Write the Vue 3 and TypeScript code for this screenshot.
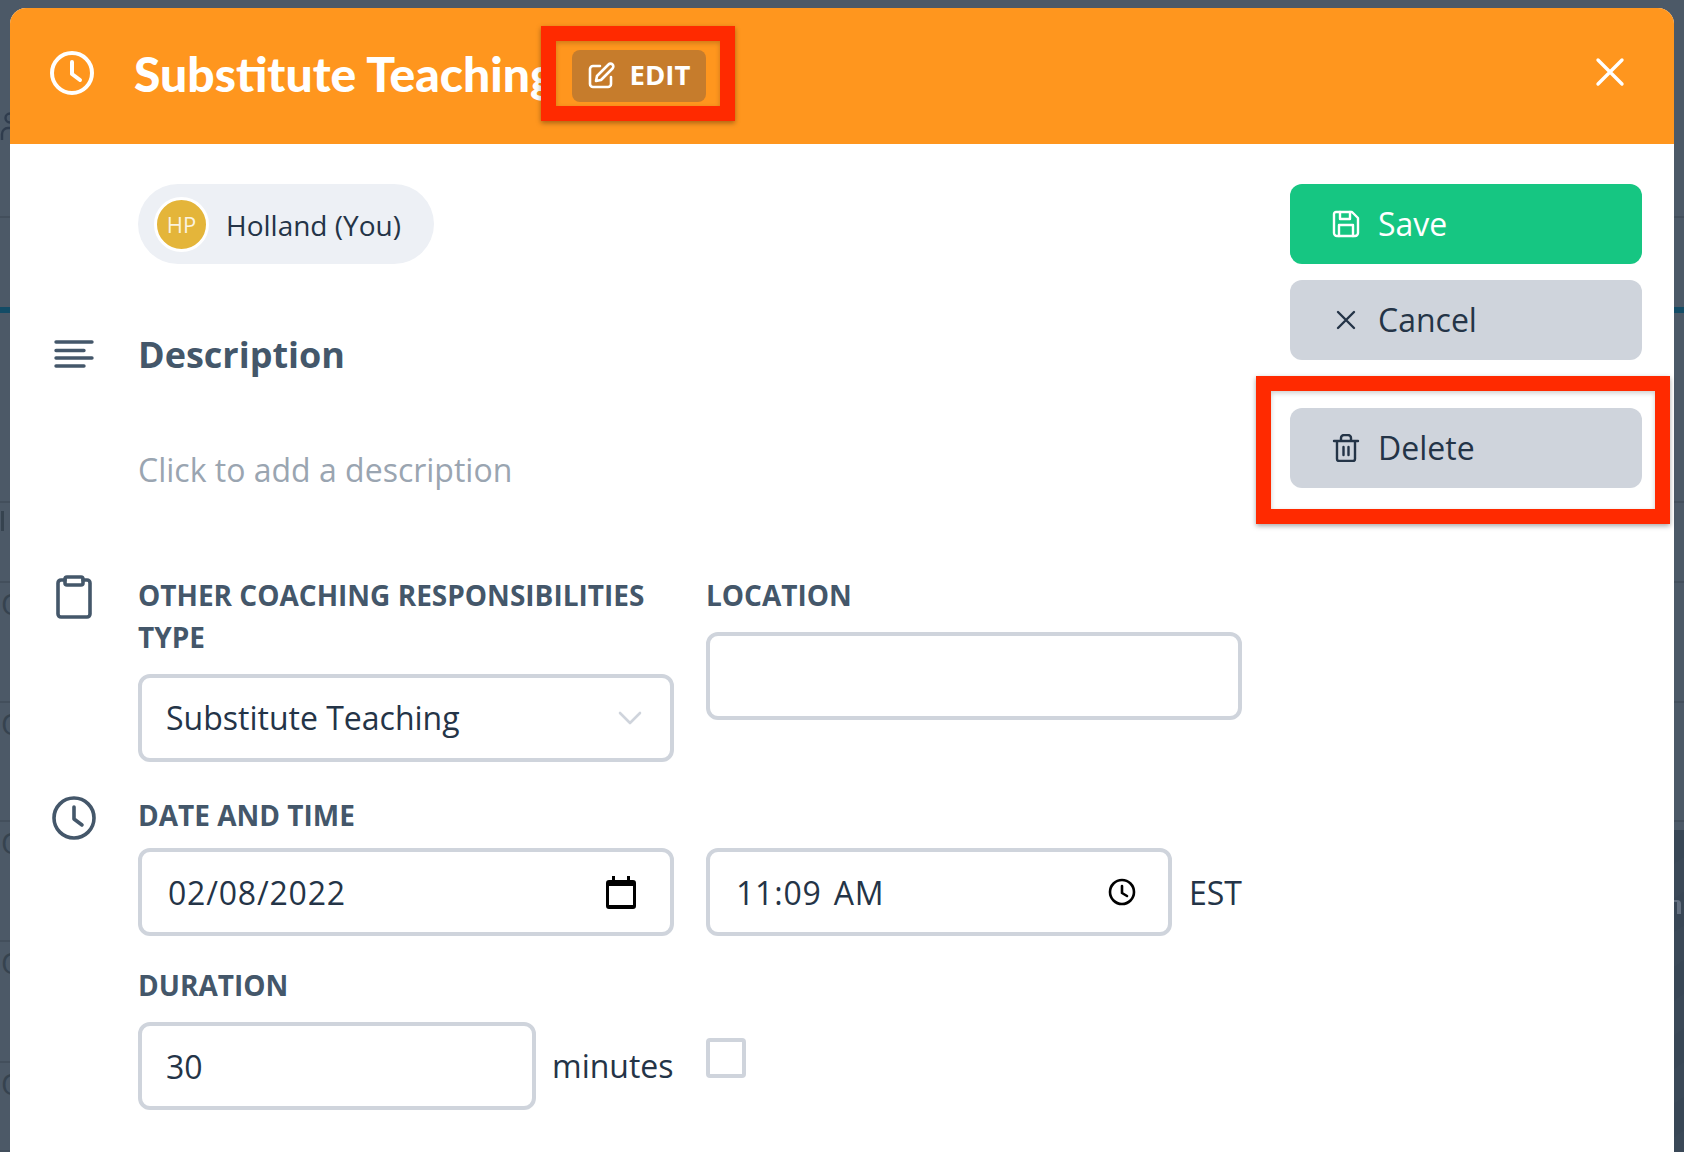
<script setup lang="ts">
interface BackRow {
  height: number;
  glyph: boolean;
  teal: boolean;
}

const rows: BackRow[] = [
  { height: 218, glyph: false, teal: false },
  { height: 95, glyph: false, teal: true },
  { height: 190, glyph: false, teal: false },
  { height: 80, glyph: false, teal: false },
  { height: 120, glyph: true, teal: false },
  { height: 119, glyph: true, teal: false },
  { height: 120, glyph: true, teal: false },
  { height: 121, glyph: true, teal: false },
  { height: 89, glyph: true, teal: false },
];
</script>

<template>
  <div class="backdrop">
    <div class="behind" aria-hidden="true">
      <div
        v-for="(row, i) in rows"
        :key="i"
        class="back-row"
        :class="{ teal: row.teal }"
        :style="{ height: row.height + 'px' }"
      >
        <span v-if="row.glyph" class="back-glyph">O</span>
      </div>
      <svg class="back-person" viewBox="0 0 10 28" fill="none" stroke="#2f3c4d" stroke-width="2.4">
        <circle cx="10" cy="6" r="4.500" />
        <path d="M2 28v-6a6 6 0 0 1 6-6h2" />
      </svg>
      <span class="back-bar"></span>
      <div class="back-corner"><span></span></div>
    </div>

    <section class="modal">
      <header class="head">
        <svg class="head-clock" viewBox="0 0 44 44" fill="none" stroke="#fff" stroke-width="4" stroke-linecap="round" stroke-linejoin="round">
          <circle cx="22" cy="22" r="20" />
          <path d="M22 11v12l8 6" />
        </svg>
        <h1 class="title">Substitute Teaching</h1>
        <button class="edit">
          <svg viewBox="0 0 28 28" fill="none" stroke="#fff" stroke-width="2.6" stroke-linecap="round" stroke-linejoin="round">
            <path d="M13 4H6a3 3 0 0 0-3 3v15a3 3 0 0 0 3 3h15a3 3 0 0 0 3-3v-7" />
            <path d="M21.500 2.500a2.800 2.800 0 0 1 4 4L14 18l-5 1 1-5z" />
          </svg>
          <span>EDIT</span>
        </button>
        <svg class="close" viewBox="0 0 30 30" fill="none" stroke="#fff" stroke-width="3.4" stroke-linecap="round">
          <path d="M3 3l24 24M27 3L3 27" />
        </svg>
      </header>

      <div class="body">
        <div class="main">
          <div class="pill-row">
            <div class="pill">
              <span class="avatar">HP</span>
              <span class="who">Holland (You)</span>
            </div>
          </div>

          <div class="desc-row">
            <svg class="side-icon lines" viewBox="0 0 40 28" fill="none" stroke="#44576a" stroke-width="3.4" stroke-linecap="round">
              <path d="M2 2h36M2 10.500h28M2 18h36M2 26h28" />
            </svg>
            <h2 class="desc-title">Description</h2>
          </div>
          <p class="placeholder">Click to add a description</p>

          <div class="type-row">
            <svg class="side-icon clip" viewBox="0 0 36 44" fill="none" stroke="#44576a" stroke-width="3.6" stroke-linecap="round" stroke-linejoin="round">
              <path d="M9 5H5a3 3 0 0 0-3 3v31a3 3 0 0 0 3 3h26a3 3 0 0 0 3-3V8a3 3 0 0 0-3-3h-4" />
              <rect x="9" y="2" width="18" height="8" rx="2" />
            </svg>
            <div class="field type-field">
              <label class="label">Other coaching responsibilities type</label>
              <div class="control select">
                <span>Substitute Teaching</span>
                <svg viewBox="0 0 24 14" fill="none" stroke="#cfd4dc" stroke-width="2.6" stroke-linecap="round" stroke-linejoin="round">
                  <path d="M2 2l10 10L22 2" />
                </svg>
              </div>
            </div>
            <div class="field loc-field">
              <label class="label">Location</label>
              <div class="control"></div>
            </div>
          </div>

          <div class="date-row">
            <svg class="side-icon date-clock" viewBox="0 0 44 44" fill="none" stroke="#44576a" stroke-width="3.6" stroke-linecap="round" stroke-linejoin="round">
              <circle cx="22" cy="22" r="20" />
              <path d="M22 11v12l8 6" />
            </svg>
            <div class="field date-field">
              <label class="label tight">Date and time</label>
              <div class="inputs">
                <div class="control date">
                  <span class="native">02/08/2022</span>
                  <svg viewBox="0 0 30 34" class="cal">
                    <path fill="#000" d="M6 1h3v4h12V1h3v4h3a3 3 0 0 1 3 3v23a3 3 0 0 1-3 3H3a3 3 0 0 1-3-3V8a3 3 0 0 1 3-3h3z" />
                    <rect x="3" y="11" width="24" height="19" fill="#fff" />
                  </svg>
                </div>
                <div class="control time">
                  <span class="native">11:09 AM</span>
                  <svg viewBox="0 0 28 28" class="tclock" fill="none" stroke="#000" stroke-width="2.6" stroke-linecap="round" stroke-linejoin="round">
                    <circle cx="14" cy="14" r="12" />
                    <path d="M14 8v7l5 3" />
                  </svg>
                </div>
                <span class="suffix">EST</span>
              </div>
            </div>
          </div>

          <div class="duration">
            <label class="label">Duration</label>
            <div class="inputs">
              <div class="control dur"><span>30</span></div>
              <span class="suffix">minutes</span>
              <span class="check"></span>
            </div>
          </div>
        </div>

        <aside class="actions">
          <button class="btn save">
            <svg viewBox="0 0 28 28" fill="none" stroke="#fff" stroke-width="2.400" stroke-linecap="round" stroke-linejoin="round">
              <path d="M4 2h16l6 6v15a3 3 0 0 1-3 3H5a3 3 0 0 1-3-3V4a2 2 0 0 1 2-2z" />
              <path d="M8 2v7h10V2M7 26V15h14v11" />
            </svg>
            <span>Save</span>
          </button>
          <button class="btn">
            <svg viewBox="0 0 28 28" fill="none" stroke="#243447" stroke-width="2.400" stroke-linecap="round">
              <path d="M6 6l16 16M22 6L6 22" />
            </svg>
            <span>Cancel</span>
          </button>
          <button class="btn delete">
            <svg viewBox="0 0 28 28" fill="none" stroke="#243447" stroke-width="2.400" stroke-linecap="round" stroke-linejoin="round">
              <path d="M2 7h24M5 7v18a2 2 0 0 0 2 2h14a2 2 0 0 0 2-2V7M9 7V4a3 3 0 0 1 3-3h4a3 3 0 0 1 3 3v3M11.500 13v8M16.500 13v8" />
            </svg>
            <span>Delete</span>
          </button>
        </aside>
      </div>
    </section>

    <div class="mark mark-edit"></div>
    <div class="mark mark-delete"></div>
  </div>
</template>

<style>
html, body { margin: 0; background: #4c5967; }
</style>

<style scoped>
.backdrop {
  position: relative;
  width: 1684px;
  height: 1152px;
  overflow: hidden;
  box-sizing: border-box;
  padding: 8px 10px 0;
  background: #4c5967;
  font-family: "Open Sans", "Noto Sans", sans-serif;
  color: #243447;
}
.behind {
  position: absolute;
  inset: 0;
  display: flex;
  flex-direction: column;
  background: #4c5967;
}
.back-row {
  box-sizing: border-box;
  flex: none;
  border-bottom: 2px solid #434f5c;
  padding-top: 8px;
}
.back-row.teal { border-bottom: 6px solid #134c66; }
.back-glyph {
  display: block;
  font-size: 30px;
  line-height: 26px;
  color: #36434f;
  padding-left: 1px;
}
.back-person {
  position: absolute;
  left: 0;
  top: 112px;
  width: 10px;
  height: 28px;
}
.back-bar {
  position: absolute;
  left: 1px;
  top: 511px;
  width: 3px;
  height: 20px;
  background: #36434f;
}
.back-corner {
  position: absolute;
  right: 0;
  top: 830px;
  bottom: 0;
  width: 10px;
  background: repeating-linear-gradient(145deg, #384655 0 28px, #3a4857 28px 56px);
}
.back-corner span {
  position: absolute;
  left: 0;
  top: 70px;
  width: 7px;
  height: 14px;
  box-sizing: border-box;
  border-top: 2px solid #647080;
  border-right: 4px solid #647080;
  border-radius: 0 4px 0 0;
}
.modal {
  position: relative;
  height: 1144px;
  background: #fff;
  border-radius: 16px 16px 0 0;
  overflow: hidden;
}
.head {
  height: 136px;
  box-sizing: border-box;
  background: #ff961e;
  display: flex;
  align-items: center;
  padding: 0 49px 0 40px;
  color: #fff;
}
.head-clock { width: 44px; height: 44px; flex: none; margin-top: -6px; }
.title {
  margin: -6px 0 0 40px;
  font-family: Lato, "Open Sans", sans-serif;
  font-size: 48px;
  font-weight: 900;
  white-space: nowrap;
  width: 438px;
}
.edit {
  width: 134px;
  height: 52px;
  margin-top: -1px;
  border: 0;
  border-radius: 8px;
  background: #c67c2c;
  color: #fff;
  display: flex;
  align-items: center;
  justify-content: center;
  gap: 15px;
  font: 700 27.500px "Open Sans", sans-serif;
  padding: 0 1px 0 0;
}
.edit span { margin-top: -3px; }
.edit svg { width: 28px; height: 28px; flex: none; }
.close { width: 30px; height: 30px; margin-left: auto; margin-top: -8px; }

.body {
  display: flex;
  padding: 40px 32px 0 128px;
}
.main { width: 1106px; }
.pill-row { display: flex; }
.pill {
  width: 296px;
  height: 80px;
  box-sizing: border-box;
  border-radius: 40px;
  background: #edf0f5;
  display: flex;
  align-items: center;
  gap: 17px;
  padding-left: 16px;
  font-size: 28px;
}
.who { margin-top: 1px; }
.avatar {
  width: 49px;
  height: 49px;
  border: 3px solid #fff;
  border-radius: 50%;
  background: #e4b53a;
  color: rgba(255, 255, 255, 0.85);
  font-size: 22px;
  font-weight: 400;
  display: flex;
  align-items: center;
  justify-content: center;
  flex: none;
}
.desc-row { display: flex; align-items: center; position: relative; margin-top: 66px; height: 48px; }
.side-icon { position: absolute; }
.lines { left: -84px; top: 10px; width: 40px; height: 28px; }
.desc-title { margin: 0; font-size: 36px; font-weight: 700; color: #44576a; }
.placeholder { margin: 68px 0 0; font-size: 32px; line-height: 48px; color: #9aa5b1; }

.type-row { display: flex; gap: 32px; position: relative; margin-top: 80px; }
.clip { left: -82px; top: 1px; width: 36px; height: 44px; }
.field { display: flex; flex-direction: column; }
.type-field { width: 536px; }
.loc-field { width: 536px; }
.label {
  font-size: 28px;
  line-height: 42px;
  font-weight: 700;
  color: #44576a;
  text-transform: uppercase;
  margin-bottom: 16px;
}
.label.tight { margin-bottom: 12px; }
.control {
  height: 88px;
  box-sizing: border-box;
  border: 4px solid #cfd4dc;
  border-radius: 12px;
  display: flex;
  align-items: center;
  justify-content: space-between;
  font-size: 32px;
  background: #fff;
}
.select { padding: 0 28px 1px 24px; }
.select svg { width: 24px; height: 14px; }
.date-row { position: relative; margin-top: 32px; }
.date-clock { left: -86px; top: 2px; width: 44px; height: 44px; }
.date-field { width: 1106px; }
.inputs { display: flex; align-items: center; }
.date { width: 536px; padding: 0 34px 0 26px; }
.native { letter-spacing: 0.800px; word-spacing: 3px; }
.cal { width: 30px; height: 34px; }
.time { width: 466px; margin-left: 32px; padding: 0 32px 0 26px; }
.tclock { width: 28px; height: 28px; }
.suffix { font-size: 32px; margin-left: 17px; }
.inputs .dur + .suffix { margin: -2px 0 0 16px; }
.duration { margin-top: 28px; display: flex; flex-direction: column; }
.dur { width: 398px; padding: 0 24px; }
.check {
  width: 40px;
  height: 40px;
  box-sizing: border-box;
  border: 4px solid #cfd4dc;
  border-radius: 4px;
  margin-left: 32px;
  margin-top: -16px;
}
.actions { width: 352px; margin-left: 46px; display: flex; flex-direction: column; gap: 16px; }
.btn {
  height: 80px;
  border: 0;
  border-radius: 12px;
  background: #cfd4dc;
  color: #243447;
  display: flex;
  align-items: center;
  gap: 18px;
  padding: 0 0 0 42px;
  font: 400 32px "Open Sans", sans-serif;
}
.btn span { margin-top: -2px; }
.btn svg { width: 28px; height: 28px; flex: none; }
.save { background: #16c682; color: #fff; }
.delete { margin-top: 32px; }
.mark {
  position: absolute;
  box-sizing: border-box;
  border: 15px solid #ff2a00;
  box-shadow: 0 2px 5px rgba(0, 0, 0, 0.35), inset 0 2px 5px rgba(0, 0, 0, 0.2);
}
.mark-edit { left: 541px; top: 26px; width: 194px; height: 95px; }
.mark-delete { left: 1256px; top: 376px; width: 414px; height: 148px; }
</style>
